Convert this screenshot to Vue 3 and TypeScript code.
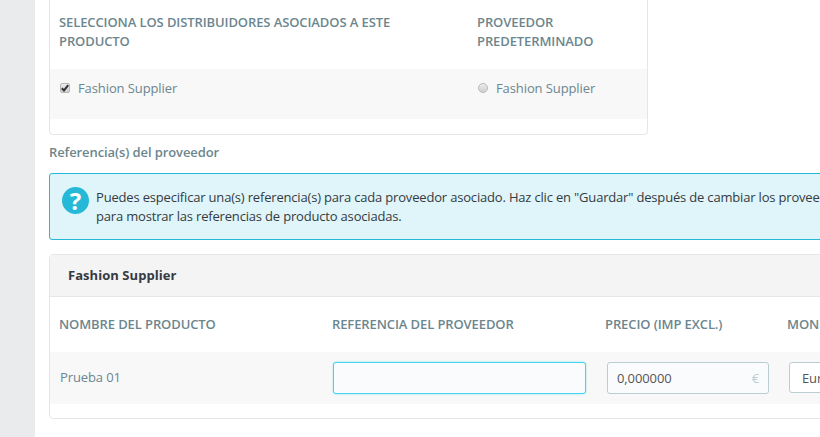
<script setup lang="ts">
const message = 'Puedes especificar una(s) referencia(s) para cada proveedor asociado. Haz clic en "Guardar" después de cambiar los proveedores'
</script>

<template>
  <div class="page">
    <aside class="rail"></aside>
    <main class="content">
      <section class="panel suppliers">
        <div class="sup-head">
          <div class="col-a">SELECCIONA LOS DISTRIBUIDORES ASOCIADOS A ESTE PRODUCTO</div>
          <div class="col-b">PROVEEDOR PREDETERMINADO</div>
        </div>
        <div class="sup-row">
          <label class="col-a opt">
            <span class="check">
              <svg width="8" height="8" viewBox="0 0 8 8"><path d="M.8 4.2 3 6.4 7.2 1.2" fill="none" stroke="#333" stroke-width="2"/></svg>
            </span>
            Fashion Supplier
          </label>
          <label class="col-b opt">
            <span class="radio"></span>
            Fashion Supplier
          </label>
        </div>
      </section>

      <div class="ref-title">Referencia(s) del proveedor</div>

      <div class="alert">
        <span class="alert-icon">?</span>
        <p>{{ message }}<br />para mostrar las referencias de producto asociadas.</p>
      </div>

      <section class="panel refs">
        <header class="refs-head">Fashion Supplier</header>
        <div class="refs-cols">
          <div class="c1">NOMBRE DEL PRODUCTO</div>
          <div class="c2">REFERENCIA DEL PROVEEDOR</div>
          <div class="c3">PRECIO (IMP EXCL.)</div>
          <div class="c4">MONEDA</div>
        </div>
        <div class="refs-row">
          <div class="c1 name">Prueba 01</div>
          <div class="c2"><div class="input focus"></div></div>
          <div class="c3"><div class="input price"><span>0,000000</span><i>€</i></div></div>
          <div class="c4"><div class="input select">Euro</div></div>
        </div>
      </section>
    </main>
  </div>
</template>

<style>
html, body { margin: 0; overflow: hidden; background: #fff; }
</style>

<style scoped>
.page {
  display: flex;
  width: 820px;
  height: 437px;
  overflow: hidden;
  font-family: "Open Sans", sans-serif;
  font-size: 13px;
  letter-spacing: -0.1px;
  color: #6c868e;
}
.rail { flex: 0 0 35px; background: #eaebed; }
.content { flex: 0 0 1000px; padding-left: 14px; box-sizing: border-box; }
.panel {
  box-sizing: border-box;
  border: 1px solid #e6e6e6;
  border-radius: 4px;
  background: #fff;
}
.suppliers {
  width: 599px;
  height: 135px;
  border-top: 0;
  border-radius: 0 0 4px 4px;
  padding-top: 13px;
}
.sup-head { display: flex; height: 56px; line-height: 19px; font-weight: 600; }
.col-a { flex: 0 0 418px; box-sizing: border-box; padding-left: 9px; padding-right: 60px; }
.col-b { flex: 0 0 auto; width: 160px; box-sizing: border-box; padding-left: 10px; padding-right: 20px; }
.sup-head .col-b { padding-left: 9px; }
.sup-row { display: flex; height: 50px; background: #f8f8f8; }
.opt { display: flex; align-items: flex-start; padding-top: 10px; line-height: 18px; }
.check, .radio {
  box-sizing: border-box;
  width: 10px;
  height: 10px;
  margin: 4px 8px 0 1px;
  border: 1px solid #b8b8b8;
  background: linear-gradient(#ececec, #cfcfcf);
  flex: none;
}
.check { border-radius: 2px; display: flex; align-items: center; justify-content: center; }
.check svg { flex: none; }
.radio { border-radius: 50%; margin-left: 0; margin-right: 8px; }
.ref-title { margin-top: 9px; height: 17px; line-height: 17px; font-weight: 600; }
.alert {
  box-sizing: border-box;
  display: flex;
  height: 67px;
  margin-top: 12px;
  padding: 13px 0 0 12px;
  background: #dff5f9;
  border: 1px solid #25b9d7;
  border-radius: 3px;
  color: #363a41;
  line-height: 19px;
  letter-spacing: -0.18px;
}
.alert p { margin: 0; white-space: nowrap; padding-top: 1px; padding-left: 7px; }
.alert-icon {
  flex: none;
  width: 27px;
  height: 27px;
  border-radius: 50%;
  background: #25b9d7;
  color: #fff;
  font-size: 24px;
  font-weight: 700;
  line-height: 27px;
  text-align: center;
}
.refs { height: 165px; margin-top: 14px; }
.refs-head {
  box-sizing: border-box;
  height: 42px;
  padding: 11px 18px 0;
  background: #f4f4f4;
  border-bottom: 1px solid #e6e6e6;
  color: #363a41;
  font-weight: 700;
  line-height: 19px;
  letter-spacing: 0.05px;
}
.refs-cols { display: flex; height: 55px; padding-top: 18px; box-sizing: border-box; font-weight: 600; line-height: 18px; white-space: nowrap; overflow: hidden; }
.refs-row { display: flex; height: 52px; background: #f8f8f8; align-items: center; }
.c1 { flex: 0 0 282px; box-sizing: border-box; padding-left: 9px; }
.c2 { flex: 0 0 273px; box-sizing: border-box; padding-right: 20px; }
.c3 { flex: 0 0 182px; box-sizing: border-box; padding-right: 20px; }
.c4 { flex: 1; }
.name { padding-left: 10px; padding-bottom: 2px; }
.input {
  box-sizing: border-box;
  height: 32px;
  border: 1px solid #bbcdd2;
  border-radius: 3px;
  background: #fafbfc;
  color: #555;
  line-height: 30px;
  padding: 0 10px;
}
.focus { border-color: #44d3ee; box-shadow: 0 0 2px #7fe2f5; width: 253px; }
.refs-row .c2 { padding-left: 1px; }
.refs-row .c4 { padding-left: 1px; }
.refs-row .c3 { padding-left: 0; margin-left: 1px; }
.refs-row .c4 { margin-left: -1px; }
.price { display: flex; justify-content: space-between; width: 162px; padding-left: 9px; padding-right: 9px; }
.price i { font-style: normal; color: #bbcdd2; }
.select { height: 31px; background: #fff; margin-bottom: 1px; padding-left: 12px; }
</style>
